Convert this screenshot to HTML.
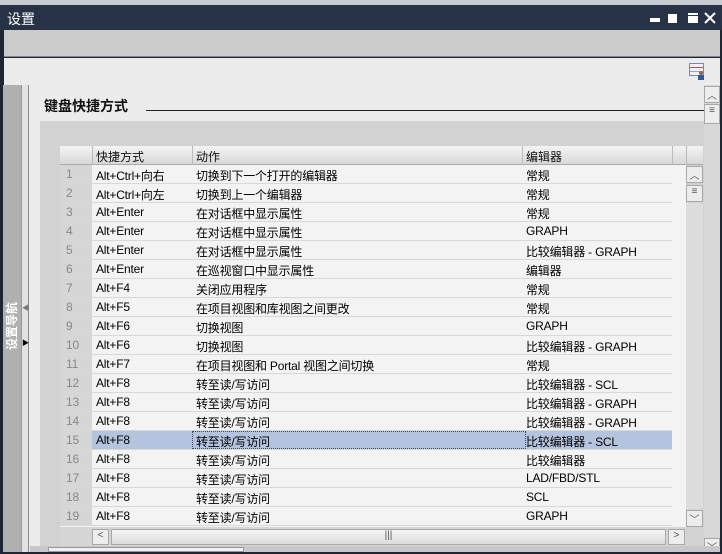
<!DOCTYPE html><html><head><meta charset="utf-8"><style>
*{margin:0;padding:0;box-sizing:border-box}
body{width:722px;height:552px;overflow:hidden;background:#1f2533;font-family:"Liberation Sans","Noto Sans CJK SC",sans-serif;position:relative}
div{position:absolute}
.t{font-size:12px;color:#111;white-space:nowrap}
.row{left:60px;width:612px;height:19px;background:#f3f3f3;border-bottom:1px solid #d8d8d8}
.row span{position:absolute;top:2px;font-size:12px;white-space:nowrap;letter-spacing:-0.2px}
.n{left:0;width:32px;height:18px;background:#d6d6d6;color:#888;padding-left:6px;top:0!important;line-height:18px}
.sb{background:#ededed;border:1px solid #a8a8a8;font-size:10px;color:#555;text-align:center}
</style></head><body>
<div style="left:0;top:0;width:722px;height:5px;background:#c7ccd2"></div>
<div style="left:0;top:5px;width:722px;height:25px;background:#283246"></div>
<div class="t" style="left:7px;top:9px;color:#fff;font-size:14px">设置</div>
<svg style="position:absolute;left:645px;top:10px" width="75" height="16" viewBox="0 0 75 16">
<rect x="5" y="8" width="10" height="4" fill="#fff"/>
<path d="M23 4h9v9h-3v-6h-6z" fill="#fff"/><rect x="23" y="6" width="6" height="7" fill="#fff"/>
<rect x="43" y="3" width="10" height="2" fill="#fff"/><rect x="43" y="6" width="10" height="7" fill="#fff"/>
<path d="M60 3l10 10M70 3l-10 10" stroke="#fff" stroke-width="2"/>
</svg>
<div style="left:4px;top:30px;width:716px;height:27px;background:#cbcbcb;border-bottom:1px solid #888"></div>
<div style="left:4px;top:58px;width:716px;height:494px;background:#ececec"></div>
<svg style="position:absolute;left:689px;top:63px" width="17" height="17" viewBox="0 0 17 17">
<rect x="0.5" y="0.5" width="14" height="12" fill="#eef2f8" stroke="#7a8aa0"/><line x1="1" y1="4.5" x2="14" y2="4.5" stroke="#c05050"/><line x1="1" y1="8.5" x2="14" y2="8.5" stroke="#9aa"/>
<circle cx="12" cy="10" r="2" fill="#a06040"/><rect x="9" y="12" width="6" height="5" fill="#2a5a9a"/>
</svg>
<div style="left:3px;top:85px;width:18px;height:467px;background:#b0b0b0"></div>
<div style="left:4px;top:294px;width:16px;height:56px;color:#fff;font-size:12px;font-weight:bold;writing-mode:vertical-rl;text-orientation:sideways;transform:rotate(180deg);line-height:16px">设置导航</div>
<div style="left:21px;top:85px;width:8px;height:467px;background:#e2e2e2;border-right:1px solid #8a8a8a;border-left:1px solid #999"></div>
<div style="left:22px;top:303px;font-size:7px;color:#777">◀</div>
<div style="left:22px;top:338px;font-size:7px;color:#000">▶</div>
<div class="t" style="left:44px;top:96px;font-size:14px;font-weight:bold">键盘快捷方式</div>
<div style="left:146px;top:110px;width:558px;height:1px;background:#222"></div>
<div style="left:40px;top:121px;width:665px;height:431px;background:#d2d2d2"></div>
<div style="left:704px;top:85px;width:16px;height:467px;background:#d8d8d8"></div>
<div class="sb" style="left:704px;top:86px;width:16px;height:17px">︿</div>
<div class="sb" style="left:704px;top:104px;width:16px;height:20px">≡</div>
<div class="sb" style="left:704px;top:538px;width:16px;height:14px">﹀</div>
<div style="left:60px;top:146px;width:643px;height:19px;background:linear-gradient(#f4f4f4,#d8d8d8);border-bottom:1px solid #aaa"></div>
<div style="left:92px;top:146px;width:1px;height:19px;background:#bbb"></div>
<div style="left:192px;top:146px;width:1px;height:19px;background:#bbb"></div>
<div style="left:522px;top:146px;width:1px;height:19px;background:#bbb"></div>
<div style="left:672px;top:146px;width:1px;height:19px;background:#bbb"></div>
<div style="left:686px;top:146px;width:1px;height:19px;background:#bbb"></div>
<div class="t" style="left:96px;top:148px">快捷方式</div>
<div class="t" style="left:196px;top:148px">动作</div>
<div class="t" style="left:526px;top:148px">编辑器</div>
<div style="left:60px;top:165px;width:626px;height:362px;background:#f3f3f3"></div>
<div id="rows"></div>
<div class="sb" style="left:686px;top:166px;width:17px;height:17px">︿</div>
<div class="sb" style="left:686px;top:185px;width:17px;height:17px">≡</div>
<div style="left:686px;top:203px;width:17px;height:306px;background:#dcdcdc"></div>
<div class="sb" style="left:686px;top:510px;width:17px;height:17px">﹀</div>
<div style="left:60px;top:527px;width:626px;height:19px;background:#d6d6d6"></div>
<div class="sb" style="left:92px;top:529px;width:17px;height:16px">&lt;</div>
<div class="sb" style="left:111px;top:529px;width:555px;height:16px;background:linear-gradient(#f4f4f4,#dcdcdc)">|||</div>
<div class="sb" style="left:668px;top:529px;width:17px;height:16px">&gt;</div>
<div style="left:30px;top:546px;width:690px;height:6px;background:#c8c8c8"></div>
<div style="left:48px;top:547px;width:196px;height:5px;background:#f0f0f0;border:1px solid #999"></div>
<script>
var d=[["Alt+Ctrl+向右","切换到下一个打开的编辑器","常规"],["Alt+Ctrl+向左","切换到上一个编辑器","常规"],["Alt+Enter","在对话框中显示属性","常规"],["Alt+Enter","在对话框中显示属性","GRAPH"],["Alt+Enter","在对话框中显示属性","比较编辑器 - GRAPH"],["Alt+Enter","在巡视窗口中显示属性","编辑器"],["Alt+F4","关闭应用程序","常规"],["Alt+F5","在项目视图和库视图之间更改","常规"],["Alt+F6","切换视图","GRAPH"],["Alt+F6","切换视图","比较编辑器 - GRAPH"],["Alt+F7","在项目视图和 Portal 视图之间切换","常规"],["Alt+F8","转至读/写访问","比较编辑器 - SCL"],["Alt+F8","转至读/写访问","比较编辑器 - GRAPH"],["Alt+F8","转至读/写访问","比较编辑器 - GRAPH"],["Alt+F8","转至读/写访问","比较编辑器 - SCL"],["Alt+F8","转至读/写访问","比较编辑器"],["Alt+F8","转至读/写访问","LAD/FBD/STL"],["Alt+F8","转至读/写访问","SCL"],["Alt+F8","转至读/写访问","GRAPH"]];
var h="";d.forEach(function(r,i){var y=165+i*19;var sel=i==14;
h+='<div class="row" style="top:'+y+'px;'+(sel?'background:#b4c3de;':'')+'"><span class="n">'+(i+1)+'</span><span style="left:36px">'+r[0]+'</span><span style="left:136px">'+r[1]+'</span><span style="left:466px">'+r[2]+'</span>'+(sel?'<div style="left:132px;top:0;width:334px;height:18px;border:1px dotted #446"></div>':'')+'</div>';});
document.getElementById("rows").outerHTML=h;
</script>
</body></html>
